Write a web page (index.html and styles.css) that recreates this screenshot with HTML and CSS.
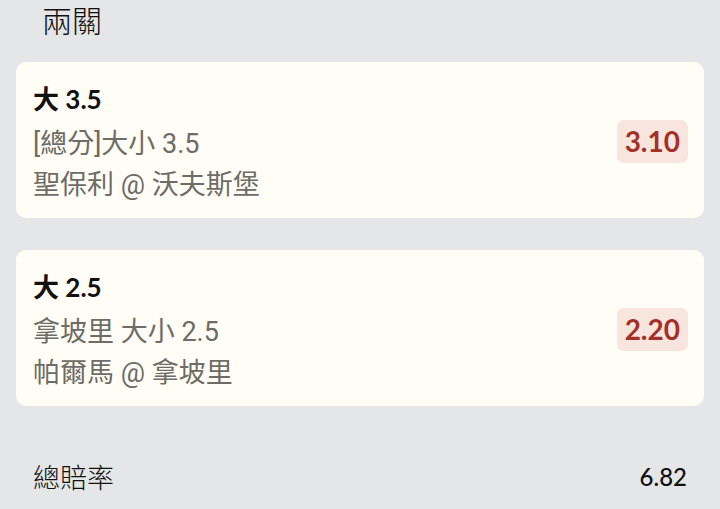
FILE: index.html
```html
<!DOCTYPE html>
<html lang="zh-Hant">
<head>
<meta charset="utf-8">
<link rel="stylesheet" href="styles.css">
</head>
<body>
<div class="page">
  <div class="title">兩關</div>
  <div class="card">
    <div class="lines">
      <div class="pick">大 3.5</div>
      <div class="sub">[總分]大小 3.5</div>
      <div class="sub">聖保利 @ 沃夫斯堡</div>
    </div>
    <div class="odds">3.10</div>
  </div>
  <div class="card">
    <div class="lines">
      <div class="pick">大 2.5</div>
      <div class="sub">拿坡里 大小 2.5</div>
      <div class="sub">帕爾馬 @ 拿坡里</div>
    </div>
    <div class="odds">2.20</div>
  </div>
  <div class="total">
    <span class="total-label">總賠率</span>
    <span class="total-value">6.82</span>
  </div>
</div>
</body>
</html>
```

FILE: styles.css
```css
html, body {
  margin: 0;
  padding: 0;
  background: #e4e6e8;
}
body {
  font-family: Lato, "Noto Sans CJK TC", sans-serif;
  color: #111;
}
.page {
  padding: 0 16px;
}
.title {
  font-family: "Noto Sans CJK TC", sans-serif;
  font-weight: 300;
  font-size: 30px;
  line-height: 38px;
  padding-left: 26px;
  margin-bottom: 24px;
  color: #111;
}
.card {
  background: #fffdf5;
  border-radius: 10px;
  padding: 17px 16px 12px 17px;
  display: flex;
  align-items: center;
  justify-content: space-between;
  margin-bottom: 32px;
}
.lines {
  display: flex;
  flex-direction: column;
}
.pick {
  font-size: 26px;
  font-weight: 700;
  line-height: 41px;
  margin-bottom: 4px;
  color: #111;
}
.sub {
  font-family: Roboto, "Noto Sans CJK TC", sans-serif;
  font-size: 27px;
  line-height: 41px;
  color: #6d6c67;
}
.odds {
  background: #f8e5de;
  color: #a5302a;
  font-weight: 700;
  font-size: 28px;
  line-height: 35px;
  padding: 4px 8px;
  border-radius: 7px;
  margin-bottom: 2px;
}
.total {
  display: flex;
  justify-content: space-between;
  align-items: center;
  padding: 0 17px 0 17px;
  margin-top: 50px;
  line-height: 41px;
}
.total-label {
  font-family: "Noto Sans CJK TC", sans-serif;
  font-weight: 300;
  font-size: 27px;
  color: #111;
}
.total-value {
  font-size: 24px;
  font-weight: 500;
  color: #111;
}
```
